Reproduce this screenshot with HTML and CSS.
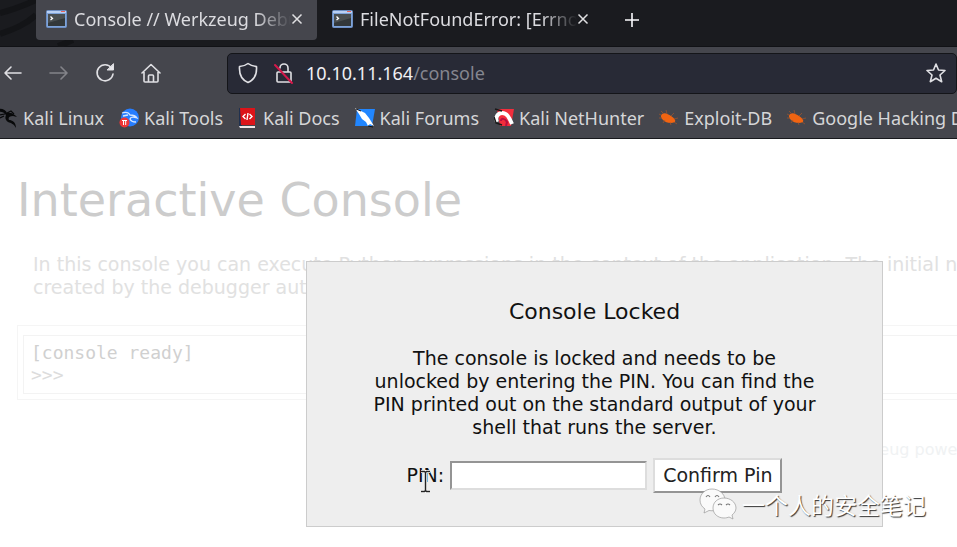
FILE: index.html
```html
<!DOCTYPE html>
<html lang="en">
<head>
<meta charset="utf-8">
<title>Console // Werkzeug Debugger</title>
<link rel="stylesheet" href="styles.css">
</head>
<body>

<!-- shared icons -->
<svg class="defs" width="0" height="0">
  <symbol id="terminal" viewBox="0 0 21 18">
    <rect x="0.5" y="0.5" width="20" height="17" rx="1" fill="#7ea3d8" stroke="#6d8fc4"/>
    <rect x="1" y="1" width="19" height="2" fill="#b9d0f3"/>
    <rect x="15" y="1" width="4" height="1" fill="#e8635a"/>
    <rect x="2" y="4" width="17" height="12" fill="#33383a"/>
    <path d="M2 4H19V8L2 13Z" fill="#4a4f51"/>
    <path d="M4.500 6.500L6.500 8.500L4.500 10" fill="none" stroke="#fff" stroke-width="1.300"/>
  </symbol>
  <symbol id="close" viewBox="0 0 12 12">
    <path d="M1.5 1.5L10.5 10.5M10.5 1.5L1.5 10.5" fill="none" stroke="#e0e0e2" stroke-width="1.5"/>
  </symbol>
  <symbol id="dragon" viewBox="0 0 20 20">
    <path d="M0 1C4 0 8 2 9 5C13 4 16 6 19 9L15 8C11 8 10 10 11 12C14 12 18 14 18 20C16 16 13 15 10 14C7 12 7 9 8 7C6 4 3 3 0 4Z" fill="currentColor"/>
    <path d="M1 7L7 6M2 10L6 8M9 5L13 3L16 6" fill="none" stroke="currentColor" stroke-width="1.200"/>
  </symbol>
  <symbol id="bug" viewBox="0 0 20 16">
    <path d="M3 4C6 2 9 4 12 6C15 8 17 10 16 12C12 14 7 13 4 10C2 8 1 6 3 4Z" fill="#f26411"/>
    <path d="M5 4L2 1M8 4L7 0M12 6L15 3M15 9L19 8M15 12L18 14M11 12L12 15M6 10L4 13M3 8L0 8M2 5L0 4" stroke="#a3562c" stroke-width="0.700"/>
  </symbol>
</svg>

<div class="browser">
  <div class="tabs">
    <svg class="wallpaper" width="110" height="47" viewBox="0 0 110 47">
      <path d="M0 13C12 10 25 5 36 0M0 34C14 29 25 25 36 15M58 46C64 44 68 42 73 40" fill="none" stroke="#131417" stroke-width="6"/>
    </svg>
    <div class="tab active">
      <svg width="21" height="18"><use href="#terminal"/></svg>
      <span class="tab-title">Console // Werkzeug Debu</span>
      <button class="tab-close" aria-label="Close tab"><svg width="12" height="12"><use href="#close"/></svg></button>
    </div>
    <div class="tab">
      <svg width="21" height="18"><use href="#terminal"/></svg>
      <span class="tab-title">FileNotFoundError: [Errno</span>
      <button class="tab-close" aria-label="Close tab"><svg width="12" height="12"><use href="#close"/></svg></button>
    </div>
    <button class="new-tab" aria-label="New tab">
      <svg width="16" height="16" viewBox="0 0 16 16"><path d="M8 1V15M1 8H15" stroke="#fbfbfe" stroke-width="1.6"/></svg>
    </button>
  </div>

  <div class="toolbar">
    <div class="nav">
      <button aria-label="Back"><svg width="20" height="20" viewBox="0 0 20 20"><path d="M18 10H2M8 4L2 10L8 16"/></svg></button>
      <button class="off" aria-label="Forward"><svg width="20" height="20" viewBox="0 0 20 20"><path d="M1 10H18M12 4L18 10L12 16"/></svg></button>
      <button aria-label="Reload"><svg width="20" height="20" viewBox="0 0 20 20"><path d="M16.5 5A8 8 0 1 0 18 11"/><path d="M18.5 1V7H12.5Z" fill="#e8e8ec" stroke-width="1"/></svg></button>
      <button aria-label="Home"><svg width="20" height="20" viewBox="0 0 20 20"><path d="M1 10L10 1.500L19 10M3 9V18Q3 19 4 19H16Q17 19 17 18V9M7.500 19V13Q7.500 12 8.500 12H11.500Q12.500 12 12.500 13V19"/></svg></button>
    </div>
    <div class="urlbar">
      <svg width="20" height="22" viewBox="0 0 20 22"><path d="M10 1.500C12.500 3.500 15 4.200 18.500 4.500C19 12 16 18 10 20.500C4 18 1 12 1.500 4.500C5 4.200 7.500 3.500 10 1.500Z"/></svg>
      <svg width="20" height="22" viewBox="0 0 20 22"><path d="M6 6A4 4 0 0 1 14 6V10M4 10H16Q17 10 17 11V19Q17 20 16 20H4Q3 20 3 19V11Q3 10 4 10Z"/><path d="M1 3L18 21" stroke="#d3184a" stroke-width="2"/></svg>
      <span class="url">10.10.11.164<span>/console</span></span>
      <svg class="star" width="20" height="20" viewBox="0 0 20 20"><path d="M10 1L12.500 7L19 7.500L14 12L15.700 18.700L10 15.200L4.300 18.700L6 12L1 7.500L7.500 7Z"/></svg>
    </div>
  </div>

  <div class="bookmarks">
    <a href="#"><svg class="black" width="20" height="20"><use href="#dragon"/></svg>Kali Linux</a>
    <a href="#"><svg width="20" height="20" viewBox="0 0 20 20"><circle cx="11" cy="9.500" r="9" fill="#267dff"/><path d="M3 5Q9 3 11 7Q16 7 18 10Q12 8 11 11Q12 14 17 14M4 8L9 7" fill="none" stroke="#d5e6ff" stroke-width="1.300"/><circle cx="5.500" cy="14.500" r="5" fill="#f03536"/><path d="M3 12.500H8M4.500 13V17M6.700 13V17" stroke="#fff"/></svg>Kali Tools</a>
    <a href="#"><svg width="20" height="20" viewBox="0 0 20 20"><path d="M1 0H4V19H1Z" fill="#20314f"/><path d="M2 0H17V17H3Z" fill="#dc1419"/><path d="M1 18H17V20H2Z" fill="#f0e8e8"/><path d="M7.500 6L5 8.500L7.500 11M11.500 6L14 8.500L11.500 11M10 5L9 12" fill="none" stroke="#fff" stroke-width="1.400"/></svg>Kali Docs</a>
    <a href="#"><svg width="20" height="20" viewBox="0 0 20 20"><path d="M2 1H20L17 18H0Z" fill="#2186ff"/><path d="M0 0L6 3L10 5L14 10L19 18L15 16L13 18L11 14L7 11L4 6Z" fill="#fff"/><path d="M1 1L6 3M13 18L18 19" stroke="#111"/></svg>Kali Forums</a>
    <a href="#"><svg width="20" height="20" viewBox="0 0 20 20"><path d="M3 1H20L17 18H6Z" fill="#f32d3c"/><path d="M3 14C1 9 4 5 8 5C13 5 15 9 18 16" fill="none" stroke="#fff" stroke-width="4"/><path d="M7 13C7 10 11 10 13 14L12 18" fill="none" stroke="#b70f3f" stroke-width="2"/><path d="M1 1L8 3M0 9L2 15L8 17" fill="none" stroke="#191919" stroke-width="1.500"/></svg>Kali NetHunter</a>
    <a href="#"><svg width="20" height="16"><use href="#bug"/></svg>Exploit-DB</a>
    <a href="#"><svg width="20" height="16"><use href="#bug"/></svg>Google Hacking DB</a>
  </div>
</div>

<main class="page">
  <div class="debugger">
    <h1>Interactive Console</h1>
    <p class="explanation">In this console you can execute Python expressions in the context of the application. The initial namespace was<br>created by the debugger automatically.</p>
    <div class="console">
      <div class="output"><b>[console ready]</b><br>&gt;&gt;&gt;</div>
    </div>
    <div class="footer">Brought to you by DON'T PANIC, your friendly Werkzeug powered traceback interpreter.</div>
  </div>

  <form class="pin-prompt">
    <h3>Console Locked</h3>
    <p>The console is locked and needs to be unlocked by entering the PIN. You can find the PIN printed out on the standard output of your shell that runs the server.</p>
    <div class="pin-row">
      <label for="pin">PIN:</label>
      <input type="text" id="pin" name="pin">
      <button type="button">Confirm Pin</button>
    </div>
    <svg class="cursor" width="11" height="23" viewBox="0 0 11 23">
      <path d="M1 1.500H4.500L5.500 2.500L6.500 1.500H10M5.500 2.500V20.500M1 21.500H4.500L5.500 20.500L6.500 21.500H10" fill="none" stroke="#fff" stroke-width="3"/>
      <path d="M1 1.500H4.500L5.500 2.500L6.500 1.500H10M5.500 2.500V20.500M1 21.500H4.500L5.500 20.500L6.500 21.500H10" fill="none" stroke="#222" stroke-width="1.500"/>
    </svg>
  </form>

  <div class="watermark">
    <svg width="38" height="32" viewBox="0 0 38 32">
      <g fill="#fafafa" stroke="#999" stroke-width="0.700">
        <path d="M13 1C6 1 1 6 1 12C1 16 3 19 6 21L5 25L10 22.500C18 24 26 19 26 12C26 6 20 1 13 1Z"/>
        <path d="M25 10C19 10 14 14 14 20C14 26 19 30 25 30C27 30 29 29.500 30 29L34 31L33 27C35 25.500 37 23 37 20C37 14 31 10 25 10Z"/>
      </g>
      <path d="M7 9Q9 6 11 9M16 9Q18 6 20 9M19 17Q21 15 23 17M27 17Q29 15 31 17" fill="none" stroke="#777" stroke-width="1.100"/>
    </svg>
    <span>一个人的安全笔记</span>
  </div>
</main>

</body>
</html>
```
FILE: styles.css
```css
* {
  box-sizing: border-box;
}

body {
  margin: 0;
  height: 100vh;
  display: flex;
  flex-direction: column;
  overflow: hidden;
  background: #fff;
}

button {
  font: inherit;
}

.defs {
  position: absolute;
}

/* browser */
.browser {
  font-family: "Noto Sans", sans-serif;
  font-size: 18px;
  color: #f0f0f3;
  background: #45464d;
  border-bottom: 1px solid #18191d;
}

.browser button {
  display: flex;
  padding: 0;
  border: 0;
  background: none;
}

.tabs {
  position: relative;
  display: flex;
  align-items: center;
  gap: 5px;
  height: 47px;
  padding: 0 0 6px 36px;
  background: #1a1b1f;
  border-bottom: 1px solid #111216;
}

.wallpaper {
  position: absolute;
  left: 0;
  top: 0;
}

.tab {
  position: relative;
  display: flex;
  align-items: center;
  gap: 7px;
  width: 281px;
  height: 100%;
  padding: 0 14px 2px 10px;
}

.active {
  background: #45464d;
  border-radius: 0 0 4px 4px;
}

.tab svg {
  flex: none;
}

.tab-title {
  flex: 1;
  overflow: hidden;
  white-space: nowrap;
  color: #dcdce0;
  -webkit-mask-image: linear-gradient(to left, transparent, #000 36px);
  mask-image: linear-gradient(to left, transparent, #000 36px);
}

.tab-close {
  margin-left: -7px;
}

.new-tab {
  margin-left: 16px;
}

.toolbar {
  display: flex;
  align-items: center;
  height: 52px;
  padding-left: 3px;
}

.nav {
  display: flex;
  gap: 26px;
  width: 224px;
}

.toolbar svg {
  flex: none;
  fill: none;
  stroke: #e0e0e4;
  stroke-width: 1.6;
  stroke-linejoin: round;
  stroke-linecap: round;
}

.nav .off {
  opacity: 0.4;
}

.urlbar {
  flex: 1;
  display: flex;
  align-items: center;
  gap: 16px;
  height: 41px;
  padding: 0 10px;
  background: #282a36;
  border: 1px solid #141519;
  border-radius: 5px;
}

.url {
  flex: 1;
  margin-left: -4px;
}

.url span {
  color: #85868f;
}

.bookmarks {
  display: flex;
  align-items: center;
  gap: 15px;
  height: 39px;
  padding-bottom: 1px;
  white-space: nowrap;
  overflow: hidden;
}

.bookmarks a {
  display: flex;
  align-items: center;
  gap: 5px;
  color: #d6d6d8;
  text-decoration: none;
}

.bookmarks a:first-child svg {
  margin-left: -2px;
}

.bookmarks svg {
  flex: none;
}

.black {
  color: #08090a;
}

/* debugger page */
.page {
  flex: 1;
  position: relative;
  overflow: hidden;
  font-family: "DejaVu Sans", sans-serif;
  font-size: 19px;
  line-height: 23px;
  color: #111;
}

.debugger {
  width: 1146px;
  margin-left: 17px;
  padding-top: 32px;
}

h1 {
  margin: 0 0 24px;
  font-size: 46px;
  font-weight: normal;
  line-height: 58px;
  color: #ccc;
}

.explanation {
  margin: 0 0 26px 16px;
  white-space: nowrap;
  color: #e1e1e1;
}

.console {
  padding: 9px 5px 5px;
  border: 1px solid #f5f5f5;
}

.output {
  height: 59px;
  padding: 6px 7px;
  border: 1px solid #f3f3f3;
  font-family: "DejaVu Sans Mono", monospace;
  font-size: 18px;
  line-height: 22px;
  color: #dcdcdc;
}

.output b {
  font-weight: normal;
  color: #d0d0d0;
}

.footer {
  margin-top: 38px;
  text-align: right;
  font-size: 16px;
  color: #f0f2f3;
}

.pin-prompt {
  position: absolute;
  left: 306px;
  top: 122px;
  width: 577px;
  height: 266px;
  padding: 37px 64px 0;
  text-align: center;
  background: #eee;
  border: 1px solid #ccc;
}

.pin-prompt h3 {
  margin: 0 0 22px;
  font-size: 22px;
  font-weight: normal;
  line-height: 26px;
}

.pin-prompt p {
  margin: 0 0 19px;
}

.pin-row {
  display: flex;
  align-items: center;
  justify-content: center;
  gap: 6px;
}

.pin-row input {
  width: 197px;
  height: 29px;
  border: 2px solid;
  border-color: #949494 #ddd #ddd #949494;
  background: #fff;
  font: inherit;
}

.pin-row button {
  height: 35px;
  padding: 0 8px;
  border: 2px solid;
  border-color: #ddd #949494 #949494 #ddd;
  background: #fff;
  color: #222;
}

.cursor {
  position: absolute;
  left: 113px;
  top: 208px;
}

.watermark {
  position: absolute;
  left: 699px;
  top: 349px;
  display: flex;
  align-items: center;
  gap: 5px;
  font-family: "Noto Sans CJK SC", sans-serif;
  font-size: 23px;
  line-height: 32px;
  color: #fff;
  text-shadow: 1px 1px 1px #333;
}
```
